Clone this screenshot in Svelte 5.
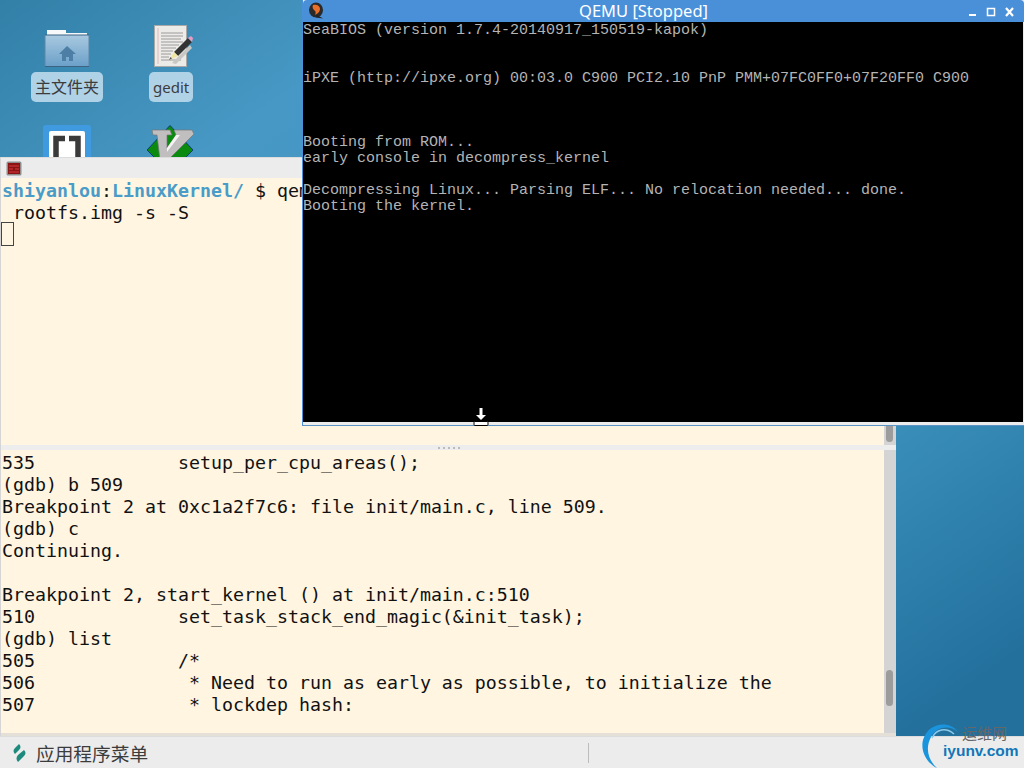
<script>
  const bios = [
    'SeaBIOS (version 1.7.4-20140917_150519-kapok)', '', '',
    'iPXE (http://ipxe.org) 00:03.0 C900 PCI2.10 PnP PMM+07FC0FF0+07F20FF0 C900', '', '', '',
    'Booting from ROM...',
    'early console in decompress_kernel', '',
    'Decompressing Linux... Parsing ELF... No relocation needed... done.',
    'Booting the kernel.',
  ];

  const gdb = [
    '535             setup_per_cpu_areas();',
    '(gdb) b 509',
    'Breakpoint 2 at 0xc1a2f7c6: file init/main.c, line 509.',
    '(gdb) c',
    'Continuing.',
    '',
    'Breakpoint 2, start_kernel () at init/main.c:510',
    '510             set_task_stack_end_magic(&init_task);',
    '(gdb) list',
    '505             /*',
    '506              * Need to run as early as possible, to initialize the',
    '507              * lockdep hash:',
  ];
</script>

<div class="desktop">
  <div class="icon" style="left:31px;top:25px">
    <svg width="46" height="42" viewBox="0 0 46 42">
      <defs>
        <linearGradient id="folder" x1="0" y1="0" x2="0" y2="1">
          <stop offset="0" stop-color="#a9c9e0"/>
          <stop offset="1" stop-color="#6a9fc8"/>
        </linearGradient>
      </defs>
      <path d="M3 6V5h19v3h21v4H3z" fill="#f6f8f9"/>
      <rect x="1" y="10" width="44" height="32" rx="1" fill="url(#folder)"/>
      <path d="M1 10h44M1 41.500h44" stroke="#3c6482"/>
      <path d="M1 10v31M45 10v31" stroke="#5c86a6"/>
      <path d="M23 21l-8 8h3v7h4v-4h3v4h4v-7h3z" fill="#4d7fa6"/>
    </svg>
    <span class="label cn">主文件夹</span>
  </div>
  <div class="icon" style="left:149px;top:25px">
    <svg width="43" height="42" viewBox="0 0 43 42">
      <rect x="4.500" y=".5" width="32" height="41" fill="#edebe8" stroke="#a9a9a9"/>
      <path d="M8 3v36" stroke="#e3b9b9"/>
      <path d="M11 8h22M11 11h22M11 14h20M11 17h22M11 20h18M11 23h15M11 26h12M11 29h10M11 32h8M11 35h20" stroke="#9a9a9a"/>
      <path d="M22 38l18-18 2 3-16 16z" fill="#c9c7c4"/>
      <path d="M24 27l14-14 4 4-14 14z" fill="#333"/>
      <path d="M19 35l5-8 4 4z" fill="#f0e6a2"/>
      <path d="M19 35l1.500-3 1.500 1.500z" fill="#555"/>
      <path d="M38 13l3-2 2 2-1 4z" fill="#e59cc4"/>
    </svg>
    <span class="label">gedit</span>
  </div>
  <div class="icon" style="left:43px;top:125px">
    <svg width="48" height="40" viewBox="0 0 48 40">
      <rect width="48" height="40" rx="3" fill="#3f9ae0"/>
      <rect x="6" y="6" width="36" height="34" rx="2" fill="#fff"/>
      <path d="M22 13.500h-9v26M26 13.500h9v26" fill="none" stroke="#3a3a3a" stroke-width="5.500"/>
    </svg>
  </div>
  <div class="icon" style="left:147px;top:125px">
    <svg width="48" height="40" viewBox="0 0 48 40">
      <path d="M23 .5L46 25 23 48 0 25z" fill="#0a8a0f" stroke="#0c3f70"/>
      <path d="M5 5h18l2 5h-5v13l9-13-2-5h18l2 4L21 35h-8L10 10H6z" fill="#c0bebe" stroke="#777" stroke-width=".7"/>
      <path d="M20 23l9-13h4L20 27z" fill="#f4f4f4"/>
    </svg>
  </div>

  <div class="term">
    <div class="term-title">
      <svg width="16" height="15" viewBox="0 0 16 15">
        <rect x=".5" y=".5" width="15" height="14" rx="1.500" fill="#8e8e8e"/>
        <rect x="2" y="2" width="12" height="11" fill="#8a1414"/>
        <path d="M3 5h10M3 8h4M9 8h4M3 11h10" stroke="#d83a3a"/>
      </svg>
    </div>
    <div class="pane upper">
      <div class="mono clip"><b class="prompt">shiyanlou</b>:<b class="prompt">LinuxKernel/</b> $ qem</div>
      <div class="mono">{' rootfs.img -s -S'}</div>
      <div class="cursor"></div>
      <div class="scroll"><i class="thumb top"></i></div>
    </div>
    <div class="divider"><span class="grip"></span></div>
    <div class="pane lower">
      {#each gdb as line}
        <div class="mono">{line}</div>
      {/each}
      <div class="scroll"><i class="thumb low"></i></div>
    </div>
  </div>

  <div class="qemu">
    <div class="qemu-title">
      <svg class="qlogo" width="16" height="17" viewBox="0 0 16 17">
        <ellipse cx="8" cy="8" rx="7" ry="7.500" fill="#2a2a2a"/>
        <path d="M5 3c4-1 7 1 7 4 0 3-3 5-5 6 1-2 1-4-1-5-1-1-2-3-1-5z" fill="#e8702a"/>
        <path d="M9 13l6 3.500-7-1z" fill="#222"/>
      </svg>
      <span class="qname">QEMU [Stopped]</span>
      <svg class="wbtns" width="46" height="15" viewBox="0 0 46 15">
        <path d="M0 12h7" stroke="#fff" stroke-width="2"/>
        <rect x="18.500" y="5.500" width="7" height="7" fill="none" stroke="#fff" stroke-width="1.500"/>
        <path d="M37 5l7 8M44 5l-7 8" stroke="#fff" stroke-width="2.200"/>
      </svg>
    </div>
    <div class="screen">
      {#each bios as line}
        <div class="vga">{line}</div>
      {/each}
      <svg class="grab" width="16" height="18" viewBox="0 0 16 18">
        <path d="M8 0v9" stroke="#fff" stroke-width="3"/>
        <path d="M3 7h10l-5 5z" fill="#fff"/>
        <rect x="1" y="13.500" width="14" height="4" rx="1" fill="#fff" stroke="#000"/>
      </svg>
    </div>
    <div class="qemu-foot"></div>
  </div>

  <div class="panel">
    <svg width="16" height="20" viewBox="0 0 16 20">
      <path d="M8 1c2 2 2 4 0 6l-4 4C2 9 2 7 4 5zM13 7c2 2 2 4 0 6l-6 6c-2-2-2-5 0-7z" fill="#1d8a7e"/>
    </svg>
    <span class="menu">应用程序菜单</span>
    <span class="sep"></span>
  </div>

  <div class="mark">
    <svg width="90" height="50" viewBox="0 0 90 50">
      <path d="M38 12C30 0 8 2 3 20c-3 12 5 24 14 28C8 40 5 28 11 17 17 6 30 5 38 12z" fill="#1a94dc"/>
      <path d="M34 14C26 7 16 9 12 18" fill="none" stroke="#8ccbed" stroke-width="1.500"/>
    </svg>
    <span class="mark-cn">运维网</span>
    <span class="mark-en">iyunv.com</span>
  </div>
</div>

<style>
  :global(body) {
    margin: 0;
    overflow: hidden;
  }

  .desktop {
    position: relative;
    width: 1024px;
    height: 768px;
    overflow: hidden;
    background: linear-gradient(145deg, #3280a8 0%, #4798c4 20%, #3a90bb 70%, #23709d 92%);
    font-family: "Noto Sans", "Noto Sans CJK SC", sans-serif;
  }

  /* desktop icons and windows sit on a free canvas */
  .icon {
    position: absolute;
    display: flex;
    flex-direction: column;
    align-items: center;
    gap: 5px;
  }

  .label {
    padding: 4px;
    border-radius: 5px;
    background: #afd2e6;
    color: #3c3c3c;
    font-size: 15px;
    line-height: 22px;
    white-space: nowrap;
  }
  .label.cn {
    font-size: 16px;
  }

  .term {
    position: absolute;
    left: 0;
    top: 157px;
    width: 896px;
    height: 579px;
    display: flex;
    flex-direction: column;
    background: #fff5e1;
    border-left: 1px solid #d5d5d5;
    box-sizing: border-box;
  }

  .term-title {
    height: 21px;
    background: #ececec;
    border-top: 1px solid #dcdcdc;
    box-sizing: border-box;
    padding: 1px 0 0 5px;
    display: flex;
    align-items: center;
  }

  .pane {
    position: relative;
    padding-left: 1px;
  }

  .upper {
    height: 267px;
    box-sizing: border-box;
    padding-top: 2px;
  }

  .lower {
    flex: 1;
    padding-top: 2px;
    border-bottom: 3px solid #e4e0d8;
  }

  .mono {
    font-family: "DejaVu Sans Mono", monospace;
    font-size: 18.27px;
    line-height: 22px;
    height: 22px;
    color: #111;
    white-space: pre;
  }

  .clip {
    width: 300px;
    overflow: hidden;
  }

  .prompt {
    color: #4a9cc8;
  }

  .cursor {
    width: 13px;
    height: 24px;
    margin: -2px 0 0 -1px;
    border: 1px solid #444;
    box-sizing: border-box;
  }

  .scroll {
    position: absolute;
    right: 0;
    top: 0;
    bottom: 0;
    width: 12px;
    background: #d4d4d4;
  }

  .thumb {
    position: absolute;
    left: 2px;
    width: 7px;
    background: #9c9c9c;
    border-radius: 4px;
  }
  .thumb.top {
    bottom: 3px;
    height: 20px;
  }
  .thumb.low {
    top: 220px;
    height: 36px;
  }

  .divider {
    height: 5px;
    background: #ededed;
    display: flex;
    justify-content: center;
    align-items: center;
  }

  .grip {
    width: 22px;
    height: 2px;
    background: repeating-linear-gradient(90deg, #bbb 0 2px, transparent 2px 5px);
  }

  .qemu {
    position: absolute;
    left: 302px;
    top: 0;
    width: 722px;
    height: 426px;
    display: flex;
    flex-direction: column;
    background: #ececec;
    border-left: 1px solid #4a90d9;
    border-bottom: 1px solid #5b93c4;
    box-sizing: border-box;
  }

  .qemu-title {
    position: relative;
    height: 22px;
    flex: none;
    background: #4a90d9;
    border-radius: 4px 4px 0 0;
    display: flex;
    align-items: center;
    justify-content: center;
  }

  .qlogo {
    position: absolute;
    left: 5px;
    top: 2px;
  }

  .wbtns {
    position: absolute;
    right: 9px;
    top: 3px;
  }

  .qname {
    color: #fff;
    font-size: 16.5px;
    line-height: 22px;
    margin-right: 40px;
  }

  .screen {
    position: relative;
    flex: 1;
    background: #000;
    margin-right: 1px;
    padding-top: 1px;
  }

  .vga {
    font-family: "Liberation Mono", monospace;
    font-size: 15px;
    line-height: 16px;
    height: 16px;
    color: #b4b4b4;
    white-space: pre;
  }

  .grab {
    position: absolute;
    left: 170px;
    bottom: -4px;
  }

  .qemu-foot {
    height: 3px;
    flex: none;
  }

  .panel {
    position: absolute;
    left: 0;
    right: 0;
    bottom: 0;
    height: 32px;
    background: #ececec;
    border-top: 1px solid #dcdcdc;
    box-sizing: border-box;
    display: flex;
    align-items: center;
    padding-left: 11px;
    gap: 9px;
  }

  .menu {
    font-size: 18.7px;
    color: #3c3c3c;
  }

  .sep {
    position: absolute;
    left: 588px;
    top: 6px;
    height: 20px;
    border-left: 1px solid #bdbdbd;
  }

  .mark {
    position: absolute;
    left: 920px;
    top: 720px;
    width: 100px;
    height: 48px;
  }
  .mark svg {
    position: absolute;
    left: 0;
    top: 0;
  }
  .mark-cn {
    position: absolute;
    left: 42px;
    top: 2px;
    font-size: 15px;
    color: #666;
  }
  .mark-en {
    position: absolute;
    left: 23px;
    top: 22px;
    font-family: "Liberation Sans", sans-serif;
    font-weight: 700;
    font-size: 15.5px;
    color: #1277b8;
  }
</style>
